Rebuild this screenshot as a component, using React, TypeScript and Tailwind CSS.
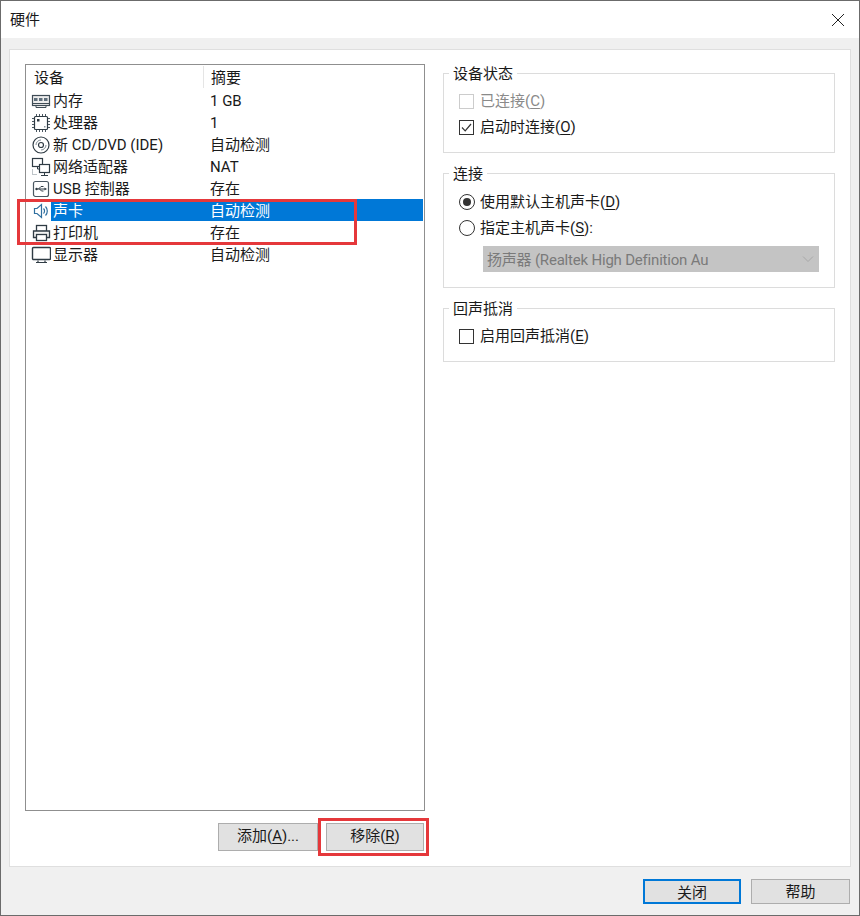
const font = "font-['Roboto','Noto_Sans_CJK_SC',sans-serif]";

function MemoryIcon() {
  return (
    <svg width="20" height="16" viewBox="0 0 20 16" fill="none">
      <rect x="1.5" y="2.5" width="17" height="10" fill="#eeeeee" stroke="#3f4c56" strokeWidth="1.2" />
      <rect x="3" y="5" width="3.5" height="3" fill="#5f6f7b" />
      <rect x="8" y="5" width="3.5" height="3" fill="#5f6f7b" />
      <rect x="13" y="5" width="3.5" height="3" fill="#5f6f7b" />
      <path d="M2 10.5h16M5 12.5v2h10v-2" stroke="#3f4c56" />
    </svg>
  );
}

function CpuIcon() {
  return (
    <svg width="20" height="20" viewBox="0 0 20 20" fill="none">
      <rect x="3.5" y="3.5" width="13" height="13" rx="1" fill="#fff" stroke="#2f3b44" strokeWidth="1.2" />
      <rect x="6" y="6" width="2.5" height="2.5" fill="#2f3b44" />
      <rect x="13" y="13" width="1.5" height="1.5" fill="#8a949c" />
      <path
        d="M1 5.5h2M1 8.5h2M1 11.5h2M1 14.5h2M17 5.5h2M17 8.5h2M17 11.5h2M17 14.5h2M5.5 1v2M8.5 1v2M11.5 1v2M14.5 1v2M5.5 17v2M8.5 17v2M11.5 17v2M14.5 17v2"
        stroke="#4a5761"
      />
    </svg>
  );
}

function DiscIcon() {
  return (
    <svg width="20" height="20" viewBox="0 0 20 20" fill="none">
      <circle cx="10" cy="10" r="8" fill="#fff" stroke="#2f3b44" strokeWidth="1.2" />
      <circle cx="10" cy="10" r="2.5" stroke="#2f3b44" strokeWidth="1.2" />
      <path d="M5 10a5 5 0 0 1 5-5M15 10a5 5 0 0 1-5 5" stroke="#7e8a93" />
    </svg>
  );
}

function NetworkIcon() {
  return (
    <svg width="20" height="20" viewBox="0 0 20 20" fill="none">
      <path d="M1.5 12.5v5h5" stroke="#7e8a93" strokeDasharray="1 1" />
      <rect x="1.5" y="1.5" width="10" height="8" fill="#fff" stroke="#2f3b44" strokeWidth="1.2" />
      <path d="M6.5 10v2h2" stroke="#2f3b44" />
      <rect x="8.5" y="7.5" width="10" height="8" fill="#fff" stroke="#2f3b44" strokeWidth="1.2" />
      <path d="M13.5 16v2M10 18.5h7" stroke="#2f3b44" />
    </svg>
  );
}

function UsbIcon() {
  return (
    <svg width="20" height="20" viewBox="0 0 20 20" fill="none">
      <rect x="2.5" y="2.5" width="15" height="15" rx="2" fill="#fff" stroke="#4a5761" strokeWidth="1.2" />
      <path d="M5 10h9M7.5 10l2.5-2.5h2.5M8.5 10l2 2h2" stroke="#2f3b44" />
      <circle cx="5.5" cy="10" r="1.2" fill="#2f3b44" />
      <path d="M13.5 8.5v3l2.5-1.5z" fill="#2f3b44" />
    </svg>
  );
}

function SpeakerIcon() {
  return (
    <svg width="20" height="20" viewBox="0 0 20 20" fill="none">
      <path d="M3.5 7.5v5h2.5l4.5 4v-13l-4.5 4z" fill="#fff" stroke="#2f6f9f" strokeWidth="1.2" />
      <path d="M12.5 7.5a3.5 3.5 0 0 1 0 5M14.5 5.5a6.5 6.5 0 0 1 0 9" stroke="#2f6f9f" strokeWidth="1.2" />
    </svg>
  );
}

function PrinterIcon() {
  return (
    <svg width="20" height="20" viewBox="0 0 20 20" fill="none">
      <rect x="5.5" y="2.5" width="10" height="6" fill="#fff" stroke="#2f3b44" strokeWidth="1.3" />
      <path d="M5 14.5H2.5v-6.5h16v6.5H16" fill="#f4f4f4" stroke="#2f3b44" strokeWidth="1.3" />
      <rect x="5.5" y="11.5" width="10" height="6" fill="#fff" stroke="#2f3b44" strokeWidth="1.3" />
    </svg>
  );
}

function MonitorIcon() {
  return (
    <svg width="20" height="20" viewBox="0 0 20 20" fill="none">
      <rect x="1.5" y="2.5" width="18" height="12" rx="1" fill="#fff" stroke="#2f3b44" strokeWidth="1.4" />
      <path d="M7 15.5v1.5M14 15.5v1.5M5 17.5h11" stroke="#2f3b44" strokeWidth="1.2" />
    </svg>
  );
}

const devices = [
  { icon: <MemoryIcon />, name: "内存", summary: "1 GB" },
  { icon: <CpuIcon />, name: "处理器", summary: "1" },
  { icon: <DiscIcon />, name: "新 CD/DVD (IDE)", summary: "自动检测" },
  { icon: <NetworkIcon />, name: "网络适配器", summary: "NAT" },
  { icon: <UsbIcon />, name: "USB 控制器", summary: "存在" },
  { icon: <SpeakerIcon />, name: "声卡", summary: "自动检测", selected: true },
  { icon: <PrinterIcon />, name: "打印机", summary: "存在" },
  { icon: <MonitorIcon />, name: "显示器", summary: "自动检测" },
];

function DeviceRow({ icon, name, summary, selected }: { icon: React.ReactNode; name: string; summary: string; selected?: boolean }) {
  return (
    <div className="flex h-[22px] items-center pr-[1px]">
      <div className="flex w-[25px] shrink-0 justify-center pl-[5px] pt-[2px]">{icon}</div>
      <div className={`flex h-[22px] flex-1 items-center ${selected ? "bg-[#0078d7] text-white" : ""}`}>
        <span className="ml-[2px] w-[157px] whitespace-nowrap pt-[2px]">{name}</span>
        <span className="pt-[2px]">{summary}</span>
      </div>
    </div>
  );
}

function Group({ title, className, children }: { title: string; className: string; children: React.ReactNode }) {
  return (
    <fieldset className={`border border-[#dcdcdc] pl-[15px] ${className}`}>
      <legend className="-ml-[10px] px-[4px] pt-[2px] leading-[18px] text-[#1a1a1a]">{title}</legend>
      {children}
    </fieldset>
  );
}

function Check({ checked, disabled, children }: { checked?: boolean; disabled?: boolean; children: React.ReactNode }) {
  return (
    <div className={`flex h-[26px] items-center gap-[6px] ${disabled ? "text-[#8a8a8a]" : ""}`}>
      <span className={`flex h-[15px] w-[15px] items-center justify-center border ${disabled ? "border-[#cccccc]" : "border-[#333333]"}`}>
        {checked && (
          <svg width="13" height="13" viewBox="0 0 13 13" fill="none">
            <path d="M2 6.5l3.2 3.3L11 3" stroke="#333333" strokeWidth="1.2" />
          </svg>
        )}
      </span>
      <span>{children}</span>
    </div>
  );
}

function Radio({ checked, children }: { checked?: boolean; children: React.ReactNode }) {
  return (
    <div className="flex h-[26px] items-center gap-[5px]">
      <span className="flex h-[16px] w-[16px] items-center justify-center rounded-full border border-[#333333]">
        {checked && <span className="h-[8px] w-[8px] rounded-full bg-[#333333]" />}
      </span>
      <span>{children}</span>
    </div>
  );
}

function Key({ children }: { children: string }) {
  return <span className="underline underline-offset-2">{children}</span>;
}

export default function App() {
  return (
    <div className={`relative flex h-[916px] w-[860px] flex-col border border-[#6b6b6b] bg-[#f0f0f0] text-[15px] text-[#1a1a1a] ${font}`}>
      <div className="flex h-[37px] shrink-0 items-center justify-between bg-white pl-[9px] pr-[14px]">
        <span className="pt-[2px]">硬件</span>
        <svg width="14" height="14" viewBox="0 0 14 14" fill="none">
          <path d="M1 1l12 12M13 1L1 13" stroke="#222222" />
        </svg>
      </div>
      <div className="flex h-[818px] shrink-0 flex-col bg-white mx-[8px] mt-[11px] border border-[#dfdfdf] pl-[15px] pr-[14px] pt-[14px]">
        <div className="flex flex-1 gap-[18px]">
          <div className="flex w-[400px] shrink-0 flex-col">
            <div className="h-[747px] border border-[#8f8f8f]">
              <div className="flex h-[24px] items-center">
                <span className="w-[177px] pl-[8px] pt-[2px]">设备</span>
                <span className="h-[22px] border-l border-[#e5e5e5] pl-[7px] pt-[1px]">摘要</span>
              </div>
              {devices.map((d) => (
                <DeviceRow key={d.name} {...d} />
              ))}
            </div>
            <div className="mt-[12px] flex justify-end gap-[8px] pr-[1px]">
              <button className="h-[28px] w-[100px] border border-[#adadad] bg-[#e1e1e1] pb-[2px]">
                添加(<Key>A</Key>)...
              </button>
              <div className="relative">
                <button className="h-[28px] w-[98px] border border-[#adadad] bg-[#e1e1e1] pb-[2px]">
                  移除(<Key>R</Key>)
                </button>
                <div className="absolute -left-[8px] -top-[5px] h-[38px] w-[111px] border-[3px] border-[#e5383b]" />
              </div>
            </div>
          </div>
          <div className="-mt-[1px] flex w-[392px] shrink-0 flex-col gap-[10px]">
            <Group title="设备状态" className="h-[90px] pt-[5px]">
              <Check disabled>
                已连接(<Key>C</Key>)
              </Check>
              <Check checked>
                启动时连接(<Key>O</Key>)
              </Check>
            </Group>
            <Group title="连接" className="h-[125px] pt-[6px]">
              <Radio checked>
                使用默认主机声卡(<Key>D</Key>)
              </Radio>
              <Radio>
                指定主机声卡(<Key>S</Key>):
              </Radio>
              <div className="ml-[24px] mr-[15px] mt-[5px] flex h-[26px] items-center justify-between bg-[#c4c4c4] pl-[4px] pr-[5px] text-[#7a7a7a]">
                <span className="pt-[2px] tracking-[-0.2px]">扬声器 (Realtek High Definition Au</span>
                <svg width="12" height="8" viewBox="0 0 12 8" fill="none">
                  <path d="M1 1.5l5 5 5-5" stroke="#a8a8a8" />
                </svg>
              </div>
            </Group>
            <Group title="回声抵消" className="h-[64px] pt-[5px]">
              <Check>
                启用回声抵消(<Key>E</Key>)
              </Check>
            </Group>
          </div>
        </div>
      </div>
      <div className="flex flex-1 items-center justify-end gap-[10px] pr-[9px]">
        <button className="h-[25px] w-[98px] border-2 border-[#0078d7] bg-[#e1e1e1] pt-[1px]">关闭</button>
        <button className="h-[25px] w-[99px] border border-[#adadad] bg-[#e1e1e1] pt-[1px]">帮助</button>
      </div>
      <div className="pointer-events-none absolute left-[16px] top-[198px] h-[46px] w-[340px] border-[3px] border-[#e5383b]" />
    </div>
  );
}
